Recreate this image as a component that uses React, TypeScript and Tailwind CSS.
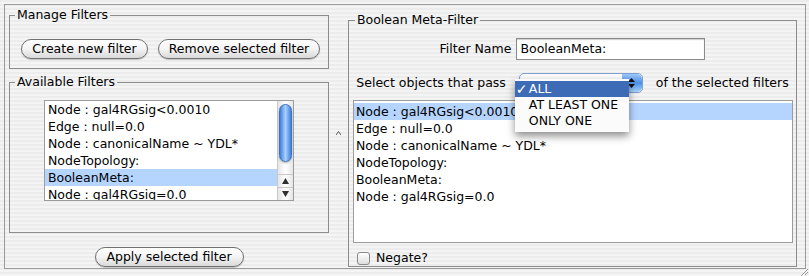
import React from "react";

const leftFilters = [
  "Node : gal4RGsig<0.0010",
  "Edge : null=0.0",
  "Node : canonicalName ~ YDL*",
  "NodeTopology:",
  "BooleanMeta:",
  "Node : gal4RGsig=0.0",
];

function AquaButton({ label, className = "" }: { label: string; className?: string }) {
  return (
    <button
      className={
        "h-[20px] rounded-full border border-[#707070] bg-gradient-to-b from-white via-[#f4f4f4] to-[#d9d9d9] text-[12.5px] leading-none text-black shadow-[0_1px_1px_rgba(0,0,0,0.2)] " +
        className
      }
    >
      {label}
    </button>
  );
}

function GroupBox({
  title,
  className,
  children,
}: {
  title: string;
  className: string;
  children: React.ReactNode;
}) {
  return (
    <fieldset className={"border border-[#8c8c8c] pl-[5px] " + className}>
      <legend className="px-[2px] text-[12.5px] leading-[16px] text-black">{title}</legend>
      {children}
    </fieldset>
  );
}

function ScrollBar() {
  return (
    <div className="flex w-[16px] shrink-0 flex-col border-l border-[#c8c8c8] bg-gradient-to-r from-[#e6e6e6] via-white to-[#e6e6e6]">
      <div className="flex-1 px-[1px] pt-[3px]">
        <div className="h-[58px] rounded-full border border-[#3d6fc0] bg-gradient-to-r from-[#3f7fe0] via-[#a9d1fb] to-[#3f7fe0] shadow-[0_1px_2px_rgba(0,0,0,0.3)]" />
      </div>
      <div className="flex h-[13px] items-center justify-center border-t border-[#c8c8c8]">
        <svg width="7" height="6" viewBox="0 0 7 6">
          <path d="M3.5 0 L7 6 L0 6 Z" fill="#303030" />
        </svg>
      </div>
      <div className="flex h-[13px] items-center justify-center border-t border-[#c8c8c8]">
        <svg width="7" height="6" viewBox="0 0 7 6">
          <path d="M0 0 L7 0 L3.5 6 Z" fill="#303030" />
        </svg>
      </div>
    </div>
  );
}

export default function App() {
  return (
    <div className="relative h-[276px] w-[809px] overflow-hidden bg-[repeating-linear-gradient(180deg,#ececec_0px,#ececec_2px,#f4f4f4_2px,#f4f4f4_4px)] pl-[4px] pt-[4px] font-['DejaVu_Sans',sans-serif] text-[12.5px] text-black">
      <div className="flex h-[265px] w-[802px] border border-[#9a9a9a]">
        {/* Left panel */}
        <div className="flex w-[328px] shrink-0 flex-col pl-[4px]">
          <GroupBox title="Manage Filters" className="mt-[2px] h-[62px] w-[320px]">
            <div className="ml-[6px] mt-[16px] flex gap-[10px]">
              <AquaButton label="Create new filter" className="w-[127px]" />
              <AquaButton label="Remove selected filter" className="w-[162px]" />
            </div>
          </GroupBox>

          <GroupBox title="Available Filters" className="mt-[5px] h-[159px] w-[320px]">
            <div className="ml-[29px] mt-[10px] flex h-[101px] w-[250px] overflow-hidden border border-[#9c9c9c] bg-white">
              <div className="flex-1 overflow-hidden">
                {leftFilters.map((f) => (
                  <div
                    key={f}
                    className={
                      "h-[17px] whitespace-nowrap pl-[3px] leading-[17px] " +
                      (f === "BooleanMeta:" ? "bg-[#b5d5ff]" : "")
                    }
                  >
                    {f}
                  </div>
                ))}
              </div>
              <ScrollBar />
            </div>
          </GroupBox>

          <div className="mt-[14px] flex justify-center pr-[4px]">
            <AquaButton label="Apply selected filter" className="w-[149px]" />
          </div>
        </div>

        {/* Split pane divider */}
        <div className="flex w-[10px] shrink-0 items-center justify-center pb-[8px]">
          <svg width="5" height="4" viewBox="0 0 5 4">
            <path d="M0 4 L2.5 0.5 L5 4" fill="none" stroke="#555" strokeWidth="1" />
          </svg>
        </div>

        {/* Right panel */}
        <div className="flex-1 pl-[5px]">
          <GroupBox title="Boolean Meta-Filter" className="mt-[7px] h-[255px] w-[449px] pl-[6px]">
            <div className="-ml-[6px] flex flex-col">
              <div className="mt-[10px] flex items-center justify-center gap-[5px]">
                <span>Filter Name</span>
                <div className="flex h-[22px] w-[189px] items-center border border-[#8a8a8a] bg-white pl-[3px] shadow-[inset_0_1px_1px_rgba(0,0,0,0.2)]">
                  BooleanMeta:
                </div>
              </div>

              <div className="mt-[13px] flex items-center justify-center gap-[13px]">
                <span>Select objects that pass</span>
                <div className="relative h-[20px] w-[124px] rounded-[5px] border border-[#7d9ed0] bg-gradient-to-b from-white to-[#e8e8e8]">
                  <div className="absolute right-0 top-0 flex h-full w-[20px] flex-col items-center justify-center gap-[2px] rounded-r-[5px] bg-gradient-to-b from-[#9cc8f8] via-[#4d8fe6] to-[#a9d3fb]">
                    <svg width="7" height="4" viewBox="0 0 7 4">
                      <path d="M3.5 0 L7 4 L0 4 Z" fill="#111" />
                    </svg>
                    <svg width="7" height="4" viewBox="0 0 7 4">
                      <path d="M0 0 L7 0 L3.5 4 Z" fill="#111" />
                    </svg>
                  </div>
                  {/* open popup menu */}
                  <div className="absolute left-[-5px] top-[5px] z-10 w-[114px] bg-[#fbfbfb] pb-[3px] pt-[2px] shadow-[0_4px_8px_rgba(0,0,0,0.45)]">
                    <div className="flex h-[16px] items-center bg-[#3d6bb6] text-white">
                      <span className="w-[14px] pl-[1px] text-[14px] leading-none">✓</span>
                      <span>ALL</span>
                    </div>
                    <div className="flex h-[16px] items-center pl-[14px]">AT LEAST ONE</div>
                    <div className="flex h-[16px] items-center pl-[14px]">ONLY ONE</div>
                  </div>
                </div>
                <span>of the selected filters</span>
              </div>

              <div className="ml-[4px] mt-[7px] h-[143px] w-[440px] overflow-hidden border border-[#9c9c9c] bg-white pt-[2px]">
                {leftFilters.map((f, i) => (
                  <div
                    key={f}
                    className={
                      "h-[17px] whitespace-nowrap pl-[2px] leading-[17px] " +
                      (i === 0 ? "bg-[#b5d5ff]" : "")
                    }
                  >
                    {f}
                  </div>
                ))}
              </div>

              <div className="ml-[8px] mt-[6px] flex items-center gap-[6px]">
                <div className="h-[13px] w-[13px] rounded-[3px] border border-[#8a8a8a] bg-gradient-to-b from-white to-[#dedede]" />
                <span>Negate?</span>
              </div>
            </div>
          </GroupBox>
        </div>
      </div>

      {/* resize grip */}
      <svg className="absolute bottom-0 right-0" width="12" height="8" viewBox="0 0 12 8">
        <path d="M11 1 L4 8 M11 4 L8 7" stroke="#9a9a9a" strokeWidth="1" />
      </svg>
    </div>
  );
}
